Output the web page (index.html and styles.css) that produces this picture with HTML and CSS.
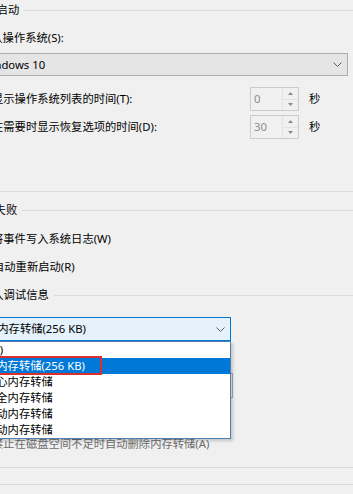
FILE: index.html
```html
<!DOCTYPE html>
<html lang="zh-CN">
<head>
<meta charset="utf-8">
<title>启动和故障恢复</title>
<link rel="stylesheet" href="styles.css">
</head>
<body>
<div class="page">
  <div class="gh gh-startup"><span class="gh-text">系统启动</span><span class="gh-line"></span></div>
  <div class="row label-default">默认操作系统(S):</div>
  <div class="combo combo-os">
    <span class="combo-text">Windows 10</span>
    <svg class="chev" width="9" height="5" viewBox="0 0 9 5"><polyline points="0.5,0.5 4.5,4.5 8.5,0.5" fill="none" stroke="#606060" stroke-width="1"/></svg>
  </div>
  <div class="spin-row spin-row-1">
    <span class="spin-label">显示操作系统列表的时间(T):</span>
    <div class="spin"><span class="spin-val">0</span><span class="spin-btns"><span class="sb sb-up"><svg width="5" height="3" viewBox="0 0 5 3"><polygon points="0,3 2.5,0 5,3" fill="#8a8a8a"/></svg></span><span class="sb"><svg width="5" height="3" viewBox="0 0 5 3"><polygon points="0,0 2.5,3 5,0" fill="#8a8a8a"/></svg></span></span></div>
    <span class="unit">秒</span>
  </div>
  <div class="spin-row spin-row-2">
    <span class="spin-label">在需要时显示恢复选项的时间(D):</span>
    <div class="spin"><span class="spin-val">30</span><span class="spin-btns"><span class="sb sb-up"><svg width="5" height="3" viewBox="0 0 5 3"><polygon points="0,3 2.5,0 5,3" fill="#8a8a8a"/></svg></span><span class="sb"><svg width="5" height="3" viewBox="0 0 5 3"><polygon points="0,0 2.5,3 5,0" fill="#8a8a8a"/></svg></span></span></div>
    <span class="unit">秒</span>
  </div>
  <div class="hline hline-startup"></div>
  <div class="gh gh-failure"><span class="gh-text">系统失败</span><span class="gh-line"></span></div>
  <div class="row check-text check-log">将事件写入系统日志(W)</div>
  <div class="row check-text check-restart">自动重新启动(R)</div>
  <div class="gh gh-debug"><span class="gh-text">写入调试信息</span><span class="gh-line"></span></div>
  <div class="combo combo-dump">
    <span class="combo-text">小内存转储(256 KB)</span>
    <svg class="chev" width="9" height="5" viewBox="0 0 9 5"><polyline points="0.5,0.5 4.5,4.5 8.5,0.5" fill="none" stroke="#606060" stroke-width="1"/></svg>
  </div>
  <div class="textbox"></div>
  <div class="row check-text check-overwrite">禁止在磁盘空间不足时自动删除内存转储(A)</div>
  <div class="hline hline-a"></div>
  <div class="hline hline-b"></div>

  <ul class="droplist">
    <li class="item">(无)</li>
    <li class="item selected">小内存转储(256 KB)</li>
    <li class="item">核心内存转储</li>
    <li class="item">完全内存转储</li>
    <li class="item">自动内存转储</li>
    <li class="item">活动内存转储</li>
  </ul>
  <div class="highlight-box"></div>
</div>
</body>
</html>
```
FILE: styles.css
```css
html, body {
  margin: 0;
  padding: 0;
  background: #f0f0f0;
}

.page {
  position: relative;
  width: 353px;
  height: 494px;
  overflow: hidden;
  background: #f0f0f0;
  font-family: "Noto Sans", "Noto Sans CJK SC", sans-serif;
  font-size: 11.3px;
  color: #000;
}

.row {
  height: 20px;
  line-height: 20px;
  white-space: nowrap;
}

/* group headers */
.gh {
  display: flex;
  align-items: center;
  height: 20px;
  white-space: nowrap;
}
.gh-text {
  line-height: 20px;
}
.gh-line {
  flex: 1;
  height: 0;
  border-top: 1px solid #dcdcdc;
  margin-left: 5px;
}
.gh-startup {
  margin-left: -26px;
}
.gh-failure {
  margin-top: 8px;
  margin-left: -28px;
}
.gh-debug {
  margin-top: 8px;
  margin-left: -19px;
}

.hline {
  height: 0;
  border-top: 1px solid #dcdcdc;
}
.hline-startup {
  margin-top: 52px;
}
.hline-a {
  margin-top: 13px;
}
.hline-b {
  margin-top: 16px;
}

.label-default {
  margin-top: 8px;
  margin-left: -20px;
}

/* combo boxes */
.combo {
  box-sizing: border-box;
  display: flex;
  align-items: center;
  white-space: nowrap;
}
.combo-text {
  flex: 1;
  line-height: 20px;
}
.chev {
  display: block;
}
.combo-os {
  margin-top: 5px;
  margin-left: -40px;
  width: 388px;
  height: 23px;
  background: #e5e5e5;
  border: 1px solid #adadad;
  padding-left: 20px;
  padding-right: 5px;
}
.combo-dump {
  margin-top: 12px;
  margin-left: -40px;
  width: 271px;
  height: 24px;
  background: #e5f1fb;
  border: 1px solid #0078d7;
  padding-left: 25px;
  padding-right: 5px;
}

/* spinners */
.spin-row {
  display: flex;
  align-items: center;
  height: 24px;
  white-space: nowrap;
  margin-left: -8px;
}
.spin-row-1 {
  margin-top: 11px;
}
.spin-row-2 {
  margin-top: 4px;
}
.spin-label {
  width: 258px;
  line-height: 20px;
}
.spin {
  box-sizing: border-box;
  display: flex;
  width: 49px;
  height: 24px;
  border: 1px solid #cccccc;
  background: #f0f0f0;
}
.spin-val {
  flex: 1;
  padding-left: 3px;
  line-height: 22px;
  color: #8c8c8c;
}
.spin-btns {
  display: flex;
  flex-direction: column;
  width: 15px;
  border-left: 1px solid #e3e3e3;
}
.sb {
  flex: 1;
  display: flex;
  align-items: center;
  justify-content: center;
}
.sb-up {
  border-bottom: 1px solid #e3e3e3;
}
.sb svg {
  display: block;
}
.unit {
  margin-left: 10px;
  line-height: 20px;
}

/* checkboxes (box clipped off the left edge) */
.check-log {
  margin-top: 9px;
  margin-left: -8px;
}
.check-restart {
  margin-top: 8px;
  margin-left: -7px;
}
.check-overwrite {
  margin-top: 36px;
  margin-left: -8px;
  color: #6d6d6d;
}

.textbox {
  box-sizing: border-box;
  margin-top: 32px;
  margin-left: -40px;
  width: 273px;
  height: 25px;
  border: 1px solid #a8a8a8;
  background: #f0f0f0;
}

/* open dropdown list */
.droplist {
  position: absolute;
  top: 341px;
  left: -19px;
  box-sizing: border-box;
  width: 250px;
  height: 98px;
  margin: 0;
  padding: 0;
  list-style: none;
  background: #fff;
  border: 1px solid #4f7fb3;
  box-shadow: 2px 2px 3px rgba(0, 0, 0, 0.18);
}
.item {
  height: 16px;
  line-height: 16px;
  padding-left: 3px;
  white-space: nowrap;
}
.item.selected {
  background: #0078d7;
  color: #fff;
}

.highlight-box {
  position: absolute;
  top: 356px;
  left: -10px;
  width: 112px;
  height: 19px;
  box-sizing: border-box;
  border: 2px solid #d9302c;
}
```
